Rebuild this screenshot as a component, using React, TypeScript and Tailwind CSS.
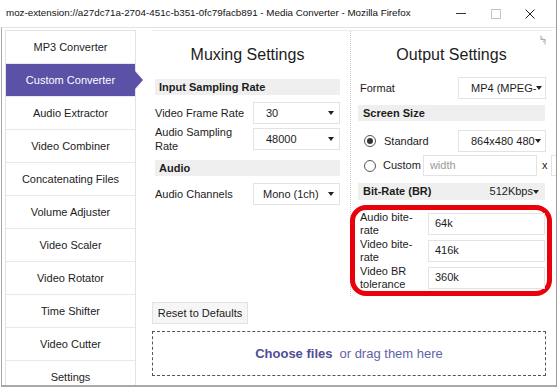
import React from "react";

const NAV = [
  "MP3 Converter",
  "Custom Converter",
  "Audio Extractor",
  "Video Combiner",
  "Concatenating Files",
  "Volume Adjuster",
  "Video Scaler",
  "Video Rotator",
  "Time Shifter",
  "Video Cutter",
  "Settings",
];

const Caret = () => (
  <span className="ml-auto h-0 w-0 flex-none border-x-[3px] border-t-[4px] border-x-transparent border-t-[#222]" />
);

const Select = ({ value, className = "" }: { value: string; className?: string }) => (
  <div className={`flex h-[22px] items-center border border-[#e3e3e3] bg-white pr-[5px] ${className}`}>
    <span className="whitespace-nowrap">{value}</span>
    <Caret />
  </div>
);

const Header = ({ children }: { children: React.ReactNode }) => (
  <div className="flex h-[16px] items-center bg-[#efefef] pl-[4px] pr-[10px] font-bold">{children}</div>
);

const Radio = ({ checked }: { checked?: boolean }) => (
  <span className="flex h-[12px] w-[12px] flex-none items-center justify-center rounded-full border border-[#555] bg-white">
    {checked && <span className="h-[6px] w-[6px] rounded-full bg-[#333]" />}
  </span>
);

const BitRow = ({ label, value }: { label: React.ReactNode; value: string }) => (
  <div className="flex h-[27px] items-center">
    <div className="w-[68px] flex-none leading-[13px]">{label}</div>
    <div className="flex h-[22px] w-[118px] items-center border border-[#e3e3e3] bg-white pl-[6px]">{value}</div>
  </div>
);

export default function App() {
  return (
    <div className="h-[387px] w-[560px] overflow-hidden bg-white font-['Liberation_Sans',Arial,sans-serif] text-[11px] text-[#1c1c1c]">
      <div className="flex h-[387px] w-[557px] flex-col border-r border-[#9c9c9c]">
        {/* --- title bar --- */}
        <div className="flex h-[27px] flex-none items-center pl-[6px] text-[9.8px] text-[#111]">
          <span className="whitespace-nowrap">
            moz-extension://a27dc71a-2704-451c-b351-0fc79facb891 - Media Converter - Mozilla Firefox
          </span>
          <div className="ml-auto flex items-center pr-[21px]">
            <span className="h-px w-[10px] bg-[#333]" />
            <span className="ml-[25px] h-[10px] w-[10px] border border-[#c4c4c4]" />
            <svg className="ml-[24px]" width="10" height="10" viewBox="0 0 10 10">
              <path d="M0.5 0.5L9.5 9.5M9.5 0.5L0.5 9.5" stroke="#222" strokeWidth="1" />
            </svg>
          </div>
        </div>

        {/* --- body --- */}
        <div className="ml-px flex min-h-0 flex-1 border-b-[2px] border-l border-t border-[#a8a8a8] border-t-[#e2e2e2]">
          {/* sidebar */}
          <nav className="ml-[3px] mt-[2px] flex w-[131px] flex-none flex-col border-x border-t border-[#e3e3e3] text-[11px]">
            {NAV.map((item) => {
              const active = item === "Custom Converter";
              return (
                <div
                  key={item}
                  className={`relative flex h-[33px] flex-none items-center justify-center border-b border-[#e8e8e8] ${
                    active ? "z-10 bg-[#5b51a6] text-white" : "text-[#1c1c1c]"
                  }`}
                >
                  {item}
                  {active && (
                    <span className="absolute right-[-8px] top-1/2 h-0 w-0 -translate-y-1/2 border-y-[9px] border-l-[8px] border-y-transparent border-l-[#5b51a6]" />
                  )}
                </div>
              );
            })}
          </nav>

          {/* main */}
          <main className="flex min-w-0 flex-1 flex-col overflow-hidden pl-[16px] pr-[4px] pt-[2px]">
            <div className="flex w-[400px] flex-none border-t border-[#ececec]">
              {/* muxing */}
              <section className="flex w-[198px] flex-none flex-col pl-[3px] pr-[10px]">
                <h2 className="mt-[14px] h-[20px] text-center text-[16px] leading-[20px]">Muxing Settings</h2>
                <div className="mt-[14px]">
                  <Header>Input Sampling Rate</Header>
                </div>
                <div className="mt-[7px] flex h-[22px] items-center">
                  <span className="w-[98px] flex-none">Video Frame Rate</span>
                  <Select value="30" className="w-[87px] pl-[12px]" />
                </div>
                <div className="mt-px flex h-[28px] items-center">
                  <span className="w-[98px] flex-none leading-[14px]">
                    Audio Sampling
                    <br />
                    Rate
                  </span>
                  <Select value="48000" className="w-[87px] pl-[12px]" />
                </div>
                <div className="mt-[7px]">
                  <Header>Audio</Header>
                </div>
                <div className="mt-[7px] flex h-[22px] items-center">
                  <span className="w-[98px] flex-none">Audio Channels</span>
                  <Select value="Mono (1ch)" className="w-[87px] pl-[9px]" />
                </div>
              </section>

              {/* output */}
              <section className="relative flex w-[202px] flex-none flex-col border-l border-dotted border-[#cfcfcf] px-[7px]">
                <svg className="absolute right-[6px] top-[4px]" width="6" height="10" viewBox="0 0 6 10">
                  <path d="M1 0.5V4.5H5V9.5M1 4.5L3 2.5M5 4.5L3 7" stroke="#aaa" strokeWidth="1" fill="none" />
                </svg>
                <h2 className="mt-[14px] h-[20px] text-center text-[16px] leading-[20px]">Output Settings</h2>
                <div className="mt-[12px] flex h-[22px] items-center">
                  <span className="w-[100px] flex-none pl-[2px]">Format</span>
                  <Select value="MP4 (MPEG-" className="w-[88px] pl-[12px] pr-[3px]" />
                </div>
                <div className="mt-[6px]">
                  <Header>
                    <span className="pl-px">Screen Size</span>
                  </Header>
                </div>
                <div className="mt-[9px] flex h-[22px] items-center">
                  <div className="flex w-[100px] flex-none items-center pl-[6px]">
                    <Radio checked />
                    <span className="ml-[8px]">Standard</span>
                  </div>
                  <Select value="864x480 480" className="w-[88px] pl-[12px] pr-[3px]" />
                </div>
                <div className="mt-[3px] flex h-[21px] items-center whitespace-nowrap pl-[6px]">
                  <Radio />
                  <span className="ml-[7px] flex-none">Custom</span>
                  <div className="ml-[2px] flex h-[21px] w-[114px] flex-none items-center border border-[#e3e3e3] pl-[6px] text-[#9a9a9a]">
                    width
                  </div>
                  <span className="ml-[5px] flex-none">x</span>
                  <div className="ml-[4px] h-[21px] w-[60px] flex-none border border-[#e3e3e3]" />
                </div>
                <div className="mt-[7px] flex h-[17px] items-center bg-[#efefef] pl-[5px] pr-[6px]">
                  <span className="font-bold">Bit-Rate (BR)</span>
                  <span className="ml-auto">512Kbps</span>
                  <span className="h-0 w-0 border-x-[3px] border-t-[4px] border-x-transparent border-t-[#222]" />
                </div>
                <div className="-ml-[8px] -mr-[7px] mt-[5px] flex flex-col rounded-[16px] border-[5px] border-[#e8000b] pl-[5px] pr-[2px]">
                  <BitRow label={<>Audio bite-<br />rate</>} value="64k" />
                  <BitRow label={<>Video bite-<br />rate</>} value="416k" />
                  <BitRow label={<>Video BR<br />tolerance</>} value="360k" />
                </div>
              </section>
            </div>

            <button className="mt-[6px] flex h-[22px] w-[96px] flex-none items-center justify-center border border-[#e2e2e2] bg-[#f6f6f6] text-[11px] text-[#1c1c1c]">
              Reset to Defaults
            </button>

            <div className="mt-[7px] flex h-[45px] w-[394px] flex-none items-center justify-center border border-dashed border-[#555] text-[13px]">
              <span className="font-bold text-[#4f4f96]">Choose files</span>
              <span className="ml-[7px] text-[#6262a6]">or drag them here</span>
            </div>
          </main>
        </div>
      </div>
    </div>
  );
}
